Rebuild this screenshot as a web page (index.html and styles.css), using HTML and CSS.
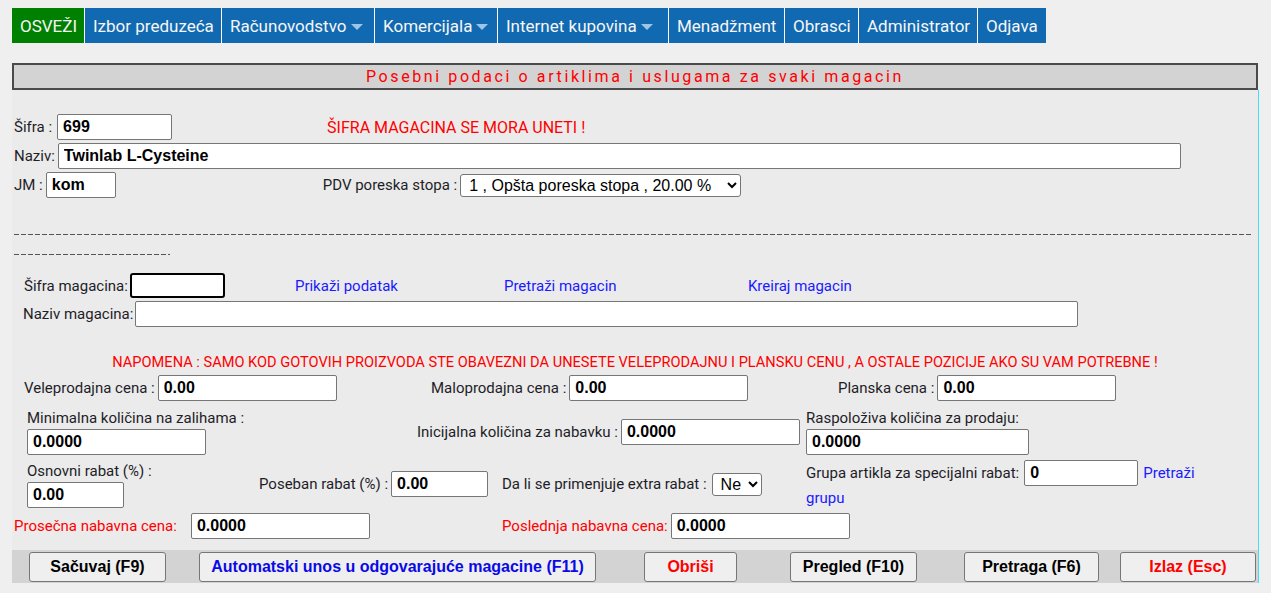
FILE: index.html
```html
<!DOCTYPE html>
<html lang="sr">
<head>
<meta charset="utf-8">
<title>Posebni podaci o artiklima</title>
<link rel="stylesheet" href="styles.css">
</head>
<body>
<nav class="topnav">
  <a class="nav-item osvezi n1">OSVEŽI</a>
  <a class="nav-item n2">Izbor preduzeća</a>
  <a class="nav-item n3">Računovodstvo<span class="caret"></span></a>
  <a class="nav-item n4">Komercijala<span class="caret"></span></a>
  <a class="nav-item n5">Internet kupovina<span class="caret"></span></a>
  <a class="nav-item n6">Menadžment</a>
  <a class="nav-item n7">Obrasci</a>
  <a class="nav-item n8">Administrator</a>
  <a class="nav-item n9 last">Odjava</a>
</nav>

<div class="title">Posebni podaci o artiklima i uslugama za svaki magacin</div>

<div class="form">
  <div class="row row-a">
    <span class="lbl">Šifra :</span>
    <input class="in w-sifra" value="699">
    <span class="msg">ŠIFRA MAGACINA SE MORA UNETI !</span>
  </div>
  <div class="row row-b">
    <span class="lbl">Naziv:</span>
    <input class="in w-naziv" value="Twinlab L-Cysteine">
  </div>
  <div class="row row-c">
    <span class="lbl">JM :</span>
    <input class="in w-jm" value="kom">
    <span class="lbl pdv">PDV poreska stopa :</span>
    <select class="sel sel-pdv"><option>1 , Opšta poreska stopa , 20.00 %</option></select>
  </div>

  <div class="dash d1"></div>
  <div class="dash d2"></div>

  <div class="row row-d">
    <span class="lbl">Šifra magacina:</span>
    <input class="in focus w-mag">
    <a class="link lk1">Prikaži podatak</a>
    <a class="link lk2">Pretraži magacin</a>
    <a class="link">Kreiraj magacin</a>
  </div>
  <div class="row row-e">
    <span class="lbl">Naziv magacina:</span>
    <input class="in w-nazmag">
  </div>

  <div class="note">NAPOMENA : SAMO KOD GOTOVIH PROIZVODA STE OBAVEZNI DA UNESETE VELEPRODAJNU I PLANSKU CENU , A OSTALE POZICIJE AKO SU VAM POTREBNE !</div>

  <div class="grid row-f">
    <div class="cell"><span class="lbl">Veleprodajna cena :</span><input class="in w-cena" value="0.00"></div>
    <div class="cell"><span class="lbl">Maloprodajna cena :</span><input class="in w-cena" value="0.00"></div>
    <div class="cell"><span class="lbl">Planska cena :</span><input class="in w-cena" value="0.00"></div>
  </div>

  <div class="grid row-g">
    <div class="stack">
      <span class="lbl">Minimalna količina na zalihama :</span>
      <input class="in w-kol" value="0.0000">
    </div>
    <div class="cell"><span class="lbl">Inicijalna količina za nabavku :</span><input class="in w-kol" value="0.0000"></div>
    <div class="stack">
      <span class="lbl">Raspoloživa količina za prodaju:</span>
      <input class="in w-rasp" value="0.0000">
    </div>
  </div>

  <div class="grid row-h">
    <div class="stack">
      <span class="lbl">Osnovni rabat (%) :</span>
      <input class="in w-rabat" value="0.00">
    </div>
    <div class="cell"><span class="lbl">Poseban rabat (%) :</span><input class="in w-rabat" value="0.00"></div>
    <div class="cell"><span class="lbl">Da li se primenjuje extra rabat :</span><select class="sel sel-ne"><option>Ne</option><option>Da</option></select></div>
    <div class="grupa">
      <div class="grupa-line">
        <span class="lbl">Grupa artikla za specijalni rabat:</span><input class="in w-grupa" value="0"><a class="link pg1">Pretraži</a>
      </div>
      <a class="link pg2">grupu</a>
    </div>
  </div>

  <div class="grid row-i">
    <div class="cell"><span class="lbl red">Prosečna nabavna cena:</span><input class="in w-kol w-pros" value="0.0000"></div>
    <div class="cell"><span class="lbl red">Poslednja nabavna cena:</span><input class="in w-kol" value="0.0000"></div>
  </div>

  <div class="buttons">
    <button class="btn b1">Sačuvaj (F9)</button>
    <button class="btn b2 blue">Automatski unos u odgovarajuće magacine (F11)</button>
    <button class="btn b3 redt">Obriši</button>
    <button class="btn b4">Pregled (F10)</button>
    <button class="btn b5">Pretraga (F6)</button>
    <button class="btn b6 redt">Izlaz (Esc)</button>
  </div>
</div>
</body>
</html>
```

FILE: styles.css
```css
body {
  margin: 8px;
  background: #efefef;
  font-family: Roboto, "Liberation Sans", sans-serif;
  font-size: 15px;
  color: #1e1e28;
}

/* top navigation */
.topnav {
  display: flex;
  height: 35px;
  margin-left: 4px;
}
.nav-item {
  box-sizing: border-box;
  height: 35px;
  padding-left: 8px;
  background: #1169b1;
  color: #f6f6f6;
  font-size: 17px;
  border-right: 1px solid #fff;
  white-space: nowrap;
  display: flex;
  align-items: center;
}
.nav-item.osvezi { background: #008000; }
.nav-item.last { border-right: 0; }
.n1 { width: 73px; }
.n2 { width: 137px; }
.n3 { width: 153px; }
.n4 { width: 123px; }
.n5 { width: 171px; }
.n6 { width: 116px; }
.n7 { width: 74px; }
.n8 { width: 119px; }
.n9 { width: 68px; }
.caret {
  display: inline-block;
  width: 0;
  height: 0;
  margin-left: 4px;
  margin-top: 3px;
  border-left: 6px solid transparent;
  border-right: 6px solid transparent;
  border-top: 6px solid #9ec4e6;
}

/* title */
.title {
  box-sizing: border-box;
  margin: 20px 0 0 4px;
  width: 1246px;
  height: 27px;
  border: 2px solid #4a4a4a;
  background: #d3d3d3;
  color: #ff0000;
  text-align: center;
  line-height: 23px;
  font-size: 16px;
  letter-spacing: 2.6px;
}

/* form panel */
.form {
  margin-left: 4px;
  width: 1246px;
  background: #ebebeb;
  border-right: 1px solid #3fe2f0;
  padding-top: 24px;
}
.row {
  display: flex;
  align-items: center;
  padding-left: 2px;
}
.row-a, .row-b, .row-c { height: 26px; }
.row-b, .row-c { margin-top: 3px; }
.row-d { margin-top: 18px; height: 25px; padding-left: 12px; }
.row-e { margin-top: 3px; height: 26px; padding-left: 11px; }

.lbl { white-space: nowrap; }
.red { color: #ff0000; }
.msg { margin-left: 155px; color: #ff0000; font-size: 16px; }
.pdv { margin-left: 207px; }

.in {
  box-sizing: border-box;
  height: 26px;
  margin-left: 3px;
  padding: 0 5px;
  border: 1px solid #767676;
  border-radius: 2px;
  background: #fff;
  color: #000;
  font: bold 16px "Liberation Sans", Arial, sans-serif;
}
.in.focus {
  height: 25px;
  border: 2px solid #000;
  border-radius: 3px;
  margin-left: 2px;
}
.w-sifra { width: 115px; margin-left: 5px; }
.w-naziv { width: 1123px; }
.w-jm { width: 70px; }
.w-mag { width: 95px; }
.w-nazmag { width: 943px; margin-left: 2px; }
.w-cena { width: 179px; }
.w-kol { width: 179px; }
.w-pros { margin-left: 14px; }
.w-rasp { width: 223px; }
.w-rabat { width: 97px; }
.w-grupa { width: 114px; margin-left: 5px; }

.sel {
  box-sizing: border-box;
  height: 23px;
  margin-left: 3px;
  padding-left: 4px;
  font: 16px "Liberation Sans", Arial, sans-serif;
  color: #000;
  background: #fff;
  border: 1px solid #767676;
  border-radius: 3px;
}
.sel-pdv { width: 281px; }
.sel-ne { width: 50px; margin-left: 5px; }

.dash {
  height: 1px;
  margin-left: 2px;
  background: repeating-linear-gradient(to right, #555 0 5px, transparent 5px 7px);
}
.d1 { width: 1238px; margin-top: 36px; }
.d2 { width: 156px; margin-top: 19px; }

.link { color: #1a1aff; white-space: nowrap; }
.lk1 { margin-left: 70px; width: 209px; }
.lk2 { width: 244px; }

.note {
  margin-top: 25px;
  line-height: 20px;
  text-align: center;
  color: #ff0000;
  font-size: 14.6px;
}

.grid { display: grid; align-items: center; }
.cell { display: flex; align-items: center; }
.stack { display: flex; flex-direction: column; align-items: flex-start; line-height: 20px; }
.stack .in { margin-left: 0; margin-top: 1px; }

.row-f { margin-top: 3px; padding-left: 12px; grid-template-columns: 407px 407px 1fr; height: 26px; }
.row-g { margin-top: 7px; padding-left: 15px; grid-template-columns: 390px 389px 1fr; }
.row-h { margin-top: 5px; padding-left: 15px; grid-template-columns: 232px 243px 304px 1fr; }
.row-i { margin-top: 5px; padding-left: 2px; grid-template-columns: 488px 1fr; height: 26px; }

.grupa { display: flex; flex-direction: column; align-items: flex-start; }
.grupa-line { display: flex; align-items: center; height: 26px; }
.pg1 { margin-left: 5px; }
.pg2 { line-height: 20px; margin-top: 2px; }

/* bottom buttons */
.buttons {
  display: flex;
  margin-top: 11px;
  padding: 2px 0 1px;
  background: #d3d3d3;
}
.btn {
  box-sizing: border-box;
  height: 30px;
  background: #efefef;
  border: 1px solid #767676;
  border-radius: 3px;
  font: bold 16px "Liberation Sans", Arial, sans-serif;
  color: #000;
  padding: 0;
}
.blue { color: #0a0ae6; }
.redt { color: #ff0000; }
.b1 { margin-left: 17px; width: 137px; }
.b2 { margin-left: 33px; width: 397px; }
.b3 { margin-left: 48px; width: 93px; }
.b4 { margin-left: 53px; width: 127px; }
.b5 { margin-left: 47px; width: 135px; }
.b6 { margin-left: 21px; width: 136px; }
```
